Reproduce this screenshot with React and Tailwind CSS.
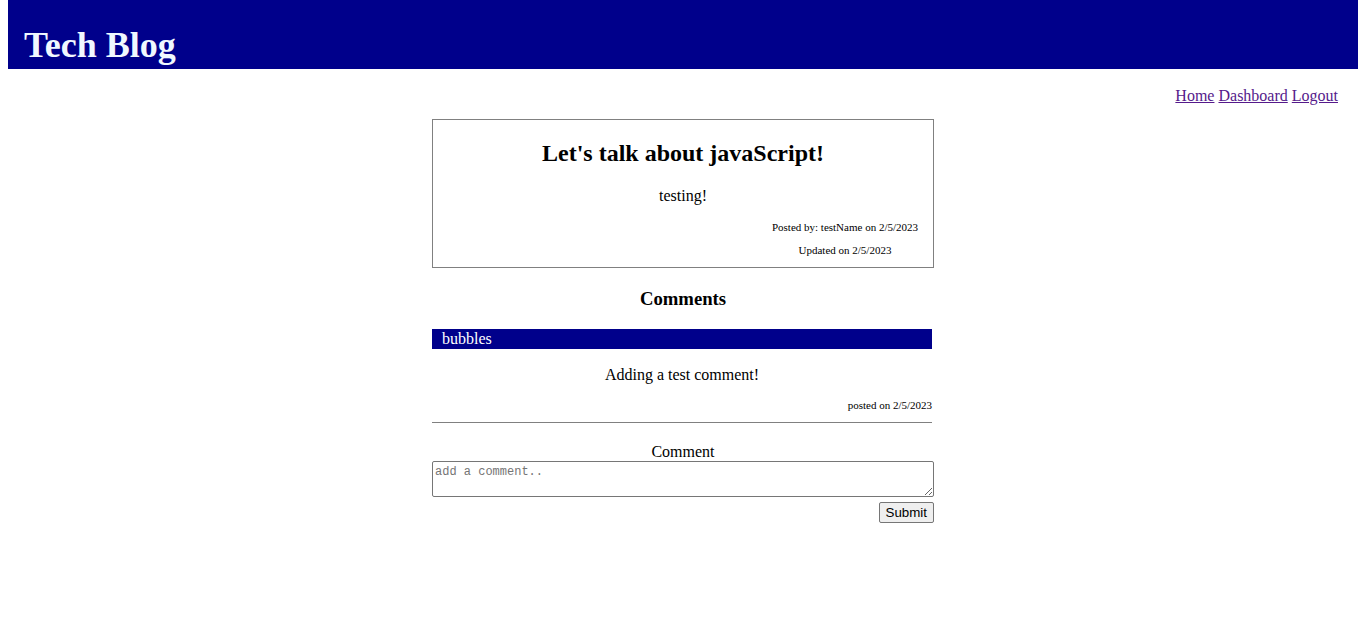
import React from 'react';

const serif = "font-['Liberation_Serif',serif]";

const App = () => {
  return (
    <div className={`mx-2 text-black ${serif}`}>
      <header className="bg-[#00008B] h-[69px] px-4 flex items-end pb-[4px]">
        <h1 className="text-[36px] font-bold leading-[40px] text-[#F0F8FF]">Tech Blog</h1>
      </header>

      <nav className="text-right pr-5 mt-[18px] text-base leading-[18px]">
        <a href="#" className="underline text-[#551A8B]">Home</a>{' '}
        <a href="#" className="underline text-[#551A8B]">Dashboard</a>{' '}
        <a href="#" className="underline text-[#551A8B]">Logout</a>
      </nav>

      <main className="w-[502px] mx-auto mt-[14px]">
        <div className="border border-[#808080] text-center pt-[19px] pb-[10px]">
          <h2 className="text-2xl font-bold leading-[28px]">Let's talk about javaScript!</h2>
          <p className="mt-[20px] text-base leading-[18px]">testing!</p>
          <div className="flex justify-end pr-[15px] mt-[16px]">
            <div className="text-center text-[11px] leading-[13px]">
              <p>Posted by: testName on 2/5/2023</p>
              <p className="mt-[10px]">Updated on 2/5/2023</p>
            </div>
          </div>
        </div>

        <h3 className="mt-[20px] text-center text-[18.72px] font-bold leading-[21px]">Comments</h3>

        <div className="w-[500px] mt-[20px]">
          <div className="bg-[#00008B] text-white h-[20px] pl-[10px] text-base leading-[20px]">bubbles</div>
          <p className="mt-[17px] text-center text-base leading-[18px]">Adding a test comment!</p>
          <p className="mt-[15px] text-right text-[11px] leading-[13px]">posted on 2/5/2023</p>
          <div className="mt-[10px] border-t border-[#808080]"></div>
        </div>

        <form className="mt-[20px]" onSubmit={(e) => e.preventDefault()}>
          <label className="block text-center text-base leading-[18px]">Comment</label>
          <textarea
            placeholder="add a comment.."
            className="block w-[502px] h-[36px] border border-[#767676] rounded-[2px] px-[2px] pt-[3px] font-['Liberation_Mono',monospace] text-[12px] leading-[15px] placeholder:text-[#757575]"
          ></textarea>
          <div className="flex justify-end mt-[5px]">
            <button
              type="submit"
              className="h-[21px] px-[6px] bg-[#EFEFEF] border border-[#767676] rounded-[2px] font-['Liberation_Sans',sans-serif] text-[13.33px] leading-[15px]"
            >
              Submit
            </button>
          </div>
        </form>
      </main>
    </div>
  );
};

export default App;
